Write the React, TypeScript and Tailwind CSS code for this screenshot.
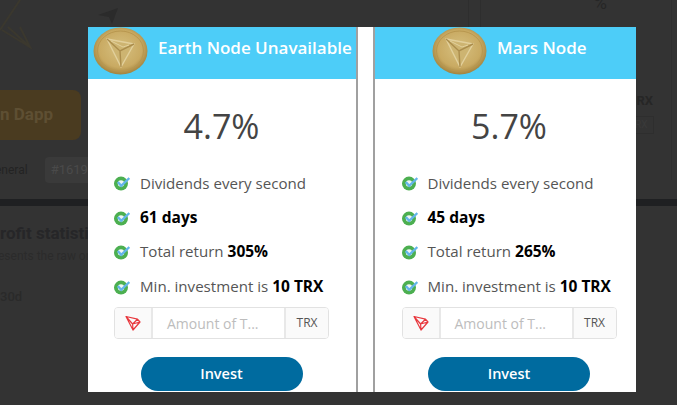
import React from "react";

const nodes = [
  { title: "Earth Node Unavailable", rate: "4.7%", days: "61 days", total: "305%", headPad: "pl-[5px]", width: "w-[270px]", inner: "w-[267px]", side: "border-r-2" },
  { title: "Mars Node", rate: "5.7%", days: "45 days", total: "265%", headPad: "pl-[57px]", width: "w-[270px]", inner: "w-[268px]", side: "border-l-2" },
];

function Coin() {
  return (
    <svg width="55" height="48" viewBox="0 0 55 48" className="shrink-0">
      <defs>
        <radialGradient id="coinFill" cx="50%" cy="45%" r="55%">
          <stop offset="0%" stopColor="#d6c080" />
          <stop offset="72%" stopColor="#c9aa62" />
          <stop offset="100%" stopColor="#a2833f" />
        </radialGradient>
      </defs>
      <ellipse cx="27.5" cy="24" rx="27" ry="23.5" fill="url(#coinFill)" />
      <ellipse cx="27.5" cy="24" rx="23" ry="20" fill="none" stroke="#b8974f" strokeWidth="1" />
      <path d="M14 12 L41 17 L28 40 Z" fill="#cdb471" stroke="#e2d09c" strokeWidth="1.4" strokeLinejoin="round" />
      <path d="M14 12 L27 24 L41 17 M27 24 L28 40" fill="none" stroke="#ab8d4c" strokeWidth="1.4" />
      <path d="M18 14 L30 20 L36 18" fill="none" stroke="#e2d09c" strokeWidth="1" />
    </svg>
  );
}

function Check() {
  return (
    <svg width="16" height="16" viewBox="0 0 16 16" className="shrink-0">
      <circle cx="7" cy="8.6" r="7" fill="#4caf50" />
      <circle cx="7" cy="8.4" r="3.2" fill="#eef6f2" />
      <path d="M3.8 7 L7.2 10.8 L15.4 3" fill="none" stroke="#63b5ea" strokeWidth="2.4" />
    </svg>
  );
}

function TronIcon() {
  return (
    <svg width="16" height="16" viewBox="0 0 16 16" className="shrink-0">
      <path
        d="M1 1.5 L12.5 4.2 L15 7 L8 15 Z M1 1.5 L7.6 9 L8 15 M7.6 9 L15 7 M7.6 9 L12.5 4.2"
        fill="none"
        stroke="#e8393f"
        strokeWidth="1.2"
        strokeLinejoin="round"
      />
    </svg>
  );
}

function Row({ children }: { children: React.ReactNode }) {
  return (
    <li className="flex items-center gap-[10px] h-[20px] text-[15.1px] text-[#555]">
      <Check />
      <span>{children}</span>
    </li>
  );
}

function NodeCard({ node }: { node: (typeof nodes)[number] }) {
  return (
    <div className={`${node.width} ${node.side} shrink-0 border-[#a0a0a0] h-full flex flex-col`}>
      <div className={`h-[52px] shrink-0 bg-[#4dcdf8] flex items-start gap-[10px] ${node.headPad}`}>
        <Coin />
        <span className="mt-[8px] text-[17px] font-semibold text-white whitespace-nowrap">{node.title}</span>
      </div>
      <div className={`${node.inner} flex flex-col items-center`}>
        <div className="mt-[23px] h-[48px] leading-[48px] text-[34px] font-medium text-[#444]">{node.rate}</div>
        <ul className="mt-[23px] w-[215px] flex flex-col gap-[14.5px]">
          <Row>Dividends every second</Row>
          <Row>
            <b className="text-[15.5px] font-bold text-black">{node.days}</b>
          </Row>
          <Row>
            Total return <b className="text-[15.5px] font-bold text-black">{node.total}</b>
          </Row>
          <Row>
            Min. investment is <b className="text-[15.5px] font-bold text-black">10 TRX</b>
          </Row>
        </ul>
        <div className="mt-[10.5px] w-[215px] h-[32px] flex border border-[#e2e2e2] rounded-[4px] overflow-hidden">
          <div className="w-[38px] shrink-0 bg-[#fafafa] border-r-2 border-[#e8e8e8] flex items-center justify-center">
            <TronIcon />
          </div>
          <div className="flex-1 px-[14px] pt-[1px] flex items-center text-[14px] text-[#bdbdbd] bg-white whitespace-nowrap">
            Amount of T...
          </div>
          <div className="w-[44px] shrink-0 bg-[#fafafa] border-l-2 border-[#e8e8e8] flex items-center justify-center text-[12px] text-[#555]">
            TRX
          </div>
        </div>
        <button className="mt-[18px] w-[162px] h-[34px] shrink-0 rounded-full bg-[#006b9f] text-white text-[14.5px] font-semibold">
          Invest
        </button>
      </div>
    </div>
  );
}

function Backdrop() {
  return (
    <div className="h-full flex flex-col font-['Roboto',sans-serif] text-[#262628]">
      <div className="h-[199px] shrink-0 flex">
        <div className="w-[130px] shrink-0 flex flex-col">
          <svg width="130" height="60" viewBox="0 0 130 60" className="shrink-0 mb-[30px]">
            <path d="M2 30 L30 47 L20 27 M20 0 L0 30 M30 47 L8 27" fill="none" stroke="#3b382e" strokeWidth="2" />
            <path d="M98 15 L118 8 L112 24 L109 17 Z" fill="#2b2b2b" />
          </svg>
          <div className="h-[50px] w-[81px] shrink-0 rounded-r-[8px] bg-[#4a3b20] flex items-center pl-0 text-[17px] font-bold text-[#5e4f33] whitespace-nowrap overflow-hidden">
            n Dapp
          </div>
          <div className="mt-[17px] h-[26px] -ml-[5px] flex items-center text-[12px] text-[#232323]">
            <span>eneral</span>
            <span className="ml-[17px] h-[26px] px-[6px] rounded-[4px] bg-[#3a3a3a] text-[13px] text-[#4a4a4a] leading-[26px]">#1619</span>
          </div>
        </div>
        <div className="ml-auto w-[209px] h-[180px] border-l border-[#2e2e2e] flex">
          <div className="ml-[11px] mr-[5px] flex-1 border-x border-[#2e2e2e] flex flex-col items-end">
            <div className="h-[9px] mr-[64px] text-[18px] leading-[6px] overflow-hidden text-[#262626]">%</div>
            <div className="mt-[84px] mr-[18px] text-[13px] font-bold text-[#262626] leading-[16px]">RX</div>
            <div className="mt-[7px] mr-[17px] w-[20px] h-[18px] border border-[#2e2e2e] text-[10px] text-[#3a3a3a] leading-[16px]">RX</div>
          </div>
        </div>
      </div>
      <div className="h-[7px] shrink-0 bg-[#1f2022]" />
      <div className="mt-[17px] text-[17px] font-bold leading-[20px] whitespace-nowrap overflow-hidden">rofit statistics</div>
      <div className="mt-[4px] -ml-[2px] text-[12px] text-[#2b2b2b] whitespace-nowrap overflow-hidden">esents the raw on</div>
      <div className="mt-[22px] text-[13px] font-medium text-[#2a2a2a]">30d</div>
    </div>
  );
}

export default function App() {
  return (
    <div className="relative w-[677px] h-[405px] bg-[#333333] overflow-hidden font-['Open_Sans',sans-serif]">
      <Backdrop />
      <div className="absolute left-[88px] top-[27px] w-[548px] h-[365px] bg-white overflow-hidden flex gap-[15px]">
        {nodes.map((node) => (
          <NodeCard key={node.rate} node={node} />
        ))}
      </div>
    </div>
  );
}
